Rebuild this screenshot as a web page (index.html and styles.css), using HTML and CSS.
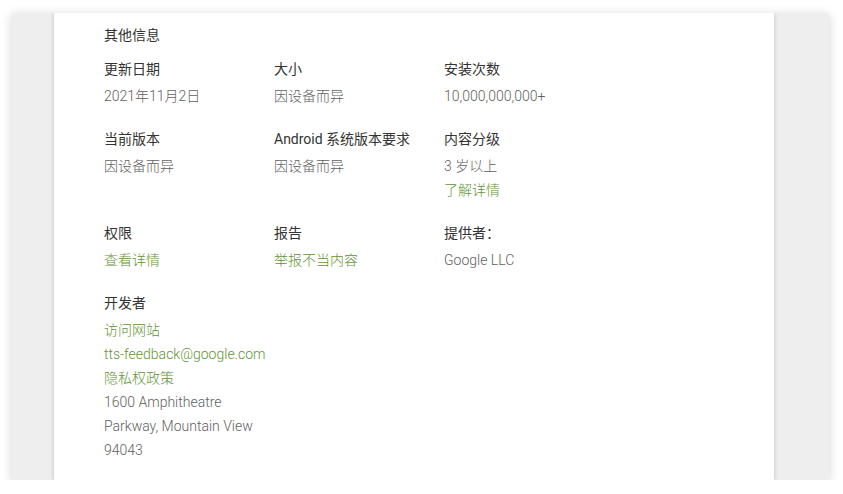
FILE: index.html
```html
<!DOCTYPE html>
<html lang="zh-CN">
<head>
<meta charset="utf-8">
<title>其他信息</title>
<link rel="stylesheet" href="styles.css">
</head>
<body>
<div class="panel">
  <div class="sheet">
    <div class="title">其他信息</div>
    <div class="grid">
      <div class="item">
        <div class="label">更新日期</div>
        <div class="value">2021年11月2日</div>
      </div>
      <div class="item">
        <div class="label">大小</div>
        <div class="value">因设备而异</div>
      </div>
      <div class="item">
        <div class="label">安装次数</div>
        <div class="value">10,000,000,000+</div>
      </div>
      <div class="item">
        <div class="label">当前版本</div>
        <div class="value">因设备而异</div>
      </div>
      <div class="item">
        <div class="label">Android 系统版本要求</div>
        <div class="value">因设备而异</div>
      </div>
      <div class="item">
        <div class="label">内容分级</div>
        <div class="value">3 岁以上</div>
        <div class="value link">了解详情</div>
      </div>
      <div class="item">
        <div class="label">权限</div>
        <div class="value link">查看详情</div>
      </div>
      <div class="item">
        <div class="label">报告</div>
        <div class="value link">举报不当内容</div>
      </div>
      <div class="item">
        <div class="label">提供者：</div>
        <div class="value">Google LLC</div>
      </div>
      <div class="item">
        <div class="label">开发者</div>
        <div class="value link">访问网站</div>
        <div class="value link">tts-feedback@google.com</div>
        <div class="value link">隐私权政策</div>
        <div class="value">1600 Amphitheatre<br>Parkway, Mountain View<br>94043</div>
      </div>
    </div>
  </div>
</div>
</body>
</html>
```

FILE: styles.css
```css
html, body {
  margin: 0;
  padding: 0;
  background: #ffffff;
}
body {
  font-family: Roboto, "Noto Sans CJK SC", sans-serif;
  font-size: 14px;
  color: #333333;
}
.panel {
  margin: 13px 14px 0 12px;
  width: 817px;
  height: 467px;
  background: #eeeeee;
  box-shadow: 0 2px 10px rgba(0, 0, 0, 0.18);
  padding-left: 42px;
  box-sizing: border-box;
  overflow: hidden;
}
.sheet {
  width: 720px;
  height: 100%;
  background: #ffffff;
  box-shadow: 0 0 4px rgba(0, 0, 0, 0.22);
  box-sizing: border-box;
  padding: 10px 0 18px 50px;
}
.title {
  line-height: 24px;
  color: #333333;
  margin-bottom: 10px;
}
.grid {
  display: grid;
  grid-template-columns: 170px 170px 170px;
  row-gap: 19px;
}
.label {
  line-height: 24px;
  color: #333333;
  margin-bottom: 3px;
  white-space: nowrap;
}
.value {
  line-height: 24px;
  color: #616161;
  font-weight: 300;
  white-space: nowrap;
}
.link {
  color: #5f9436;
}
```
